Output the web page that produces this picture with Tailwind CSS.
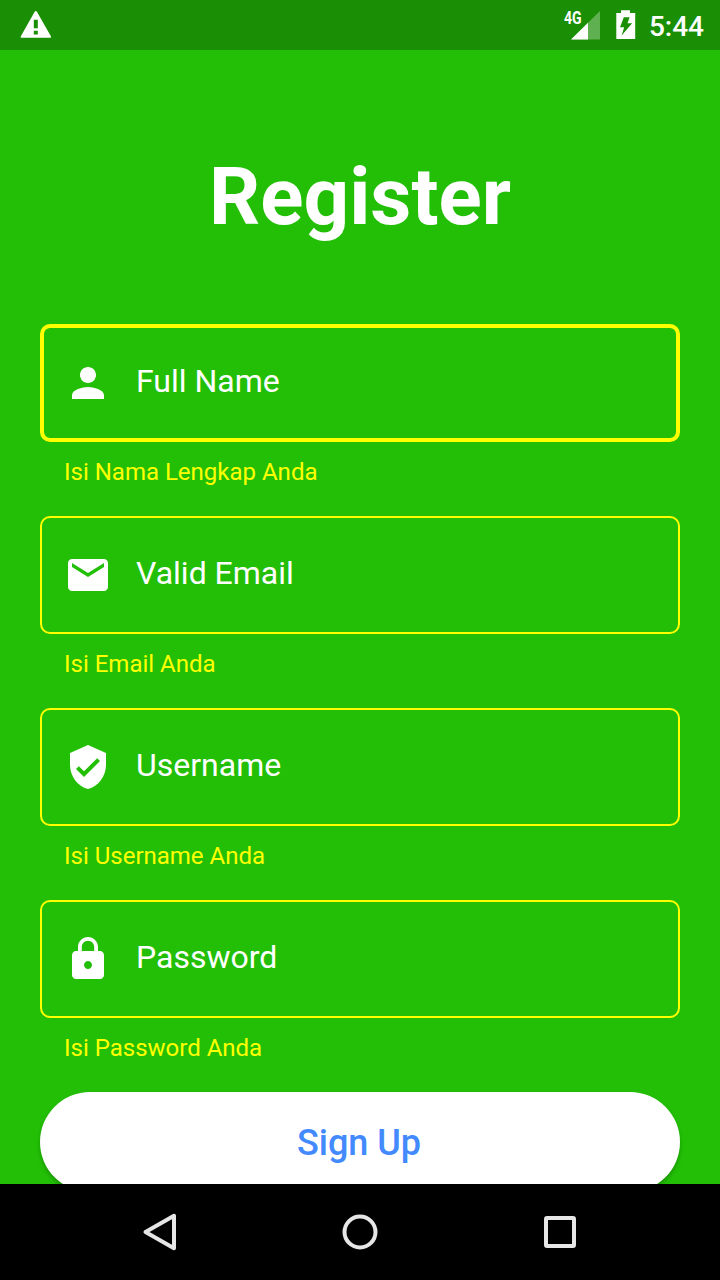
<!DOCTYPE html>
<html lang="id">
<head>
<meta charset="utf-8">
<title>Register</title>
<script src="https://cdn.jsdelivr.net/npm/@tailwindcss/browser@4"></script>
</head>
<body class="bg-[#22bf06]">
<div class="flex h-[1280px] w-[720px] flex-col overflow-hidden bg-[#22bf06] font-['Roboto',sans-serif] text-white">
  <header class="flex h-[50px] shrink-0 items-start justify-between bg-[#1a8f05] pr-4 pl-5">
    <svg class="h-[50px] w-8" viewBox="0 0 32 50" fill="#fff"><path fill-rule="evenodd" d="M14.8 11.6a1.1 1.1 0 0 1 2 0L31 36.6q.4 1.2-.8 1.2H1.5q-1.2 0-.8-1.2zM13.8 19.7v8.5h4v-8.5zM13.8 30.8v3.8h4v-3.8z"/></svg>
    <div class="flex">
      <svg class="h-[50px] w-[86px]" viewBox="-1 0 86 50" fill="#fff">
        <text x="0" y="23.6" font-size="17.5" font-weight="700" textLength="17.6" lengthAdjust="spacingAndGlyphs">4G</text>
        <path d="M36 11v28.5H7z" fill-opacity=".3"/>
        <path d="M24 22.8v16.7H7z"/>
        <path fill-rule="evenodd" d="M57 10.3h9v2.7h5.2v26H52.3V13H57zM59.8 17.3h5.8l-2.1 6h4.7L57.6 35.6l2.6-8.3h-4.2z"/>
      </svg>
      <span class="text-[28px] leading-[54px] font-medium">5:44</span>
    </div>
  </header>

  <main class="flex h-[1134px] shrink-0 flex-col overflow-hidden px-10">
    <h1 class="mt-[100px] text-center text-[80px] leading-[94px] font-bold">Register</h1>
    <form class="mt-20 flex flex-col">
      <div class="flex h-48 flex-col">
        <div class="flex h-[118px] items-center rounded-[10px] border-4 border-[#ffff00] pl-5">
          <svg class="size-12" viewBox="0 0 24 24" fill="#fff"><path d="M12 12c2.21 0 4-1.79 4-4s-1.79-4-4-4-4 1.79-4 4 1.79 4 4 4zm0 2c-2.67 0-8 1.34-8 4v2h16v-2c0-2.66-5.33-4-8-4z"/></svg>
          <label class="mb-1 ml-6 text-[32px] leading-[38px]">Full Name</label>
        </div>
        <p class="mt-4 pl-6 text-2xl leading-7 text-[#ffff00]">Isi Nama Lengkap Anda</p>
      </div>
      <div class="flex h-48 flex-col">
        <div class="flex h-[118px] items-center rounded-[10px] border-2 border-[#ffff00] pl-[22px]">
          <svg class="size-12" viewBox="0 0 24 24" fill="#fff"><path d="M20 4H4c-1.1 0-1.99.9-1.99 2L2 18c0 1.1.9 2 2 2h16c1.1 0 2-.9 2-2V6c0-1.1-.9-2-2-2zm0 4l-8 5-8-5V6l8 5 8-5v2z"/></svg>
          <label class="mb-1 ml-6 text-[32px] leading-[38px]">Valid Email</label>
        </div>
        <p class="mt-4 pl-6 text-2xl leading-7 text-[#ffff00]">Isi Email Anda</p>
      </div>
      <div class="flex h-48 flex-col">
        <div class="flex h-[118px] items-center rounded-[10px] border-2 border-[#ffff00] pl-[22px]">
          <svg class="size-12" viewBox="0 0 24 24" fill="#fff"><path d="M12 1L3 5v6c0 5.55 3.84 10.74 9 12 5.16-1.26 9-6.45 9-12V5l-9-4zm-2 16l-4-4 1.41-1.41L10 14.17l6.59-6.59L18 9l-8 8z"/></svg>
          <label class="mb-1 ml-6 text-[32px] leading-[38px]">Username</label>
        </div>
        <p class="mt-4 pl-6 text-2xl leading-7 text-[#ffff00]">Isi Username Anda</p>
      </div>
      <div class="flex h-48 flex-col">
        <div class="flex h-[118px] items-center rounded-[10px] border-2 border-[#ffff00] pl-[22px]">
          <svg class="size-12" viewBox="0 0 24 24" fill="#fff"><path d="M18 8h-1V6c0-2.76-2.24-5-5-5S7 3.24 7 6v2H6c-1.1 0-2 .9-2 2v10c0 1.1.9 2 2 2h12c1.1 0 2-.9 2-2V10c0-1.1-.9-2-2-2zm-6 9c-1.1 0-2-.9-2-2s.9-2 2-2 2 .9 2 2-.9 2-2 2zm3.1-9H8.9V6c0-1.71 1.39-3.1 3.1-3.1 1.71 0 3.1 1.39 3.1 3.1v2z"/></svg>
          <label class="mb-1 ml-6 text-[32px] leading-[38px]">Password</label>
        </div>
        <p class="mt-4 pl-6 text-2xl leading-7 text-[#ffff00]">Isi Password Anda</p>
      </div>
      <button type="button" class="h-[100px] rounded-full bg-white pt-0.5 pr-0.5 text-[36px] leading-[42px] font-medium text-[#448aff] shadow-[0_3px_5px_-1px_rgba(0,0,0,0.32)]">Sign Up</button>
    </form>
  </main>

  <nav class="flex h-24 shrink-0 items-center justify-between bg-black px-[136px]">
    <svg class="size-12" viewBox="0 0 48 48" fill="none" stroke="#e6e6e6" stroke-width="4" stroke-linejoin="round"><path d="M38 7.8v32.4L9.5 24z"/></svg>
    <svg class="size-12" viewBox="0 0 48 48" fill="none" stroke="#e6e6e6" stroke-width="4"><circle cx="24" cy="24" r="15.5"/></svg>
    <svg class="size-12" viewBox="0 0 48 48" fill="none" stroke="#e6e6e6" stroke-width="4"><rect x="10" y="10" width="28" height="28" rx="1"/></svg>
  </nav>
</div>
</body>
</html>
